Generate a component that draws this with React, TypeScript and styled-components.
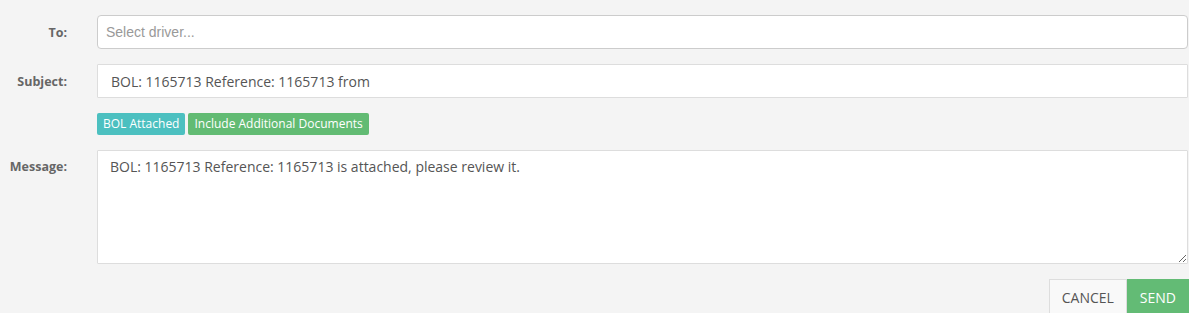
import React, { FC } from 'react';
import styled, { createGlobalStyle } from 'styled-components';

const GlobalStyle = createGlobalStyle`
  html, body {
    overflow: hidden;
  }
  body {
    margin: 0;
    background-color: #f4f4f4;
    font-family: 'Open Sans', sans-serif;
  }
`;

const Form = styled.div`
  display: grid;
  grid-template-columns: 67px 1fr;
  column-gap: 30px;
  row-gap: 15px;
  padding: 15px 1px 0 0;
  align-items: center;
`;

const Label = styled.label<{ $top?: boolean }>`
  font-size: 12.5px;
  font-weight: 700;
  color: #666;
  text-align: right;
  align-self: ${(p) => (p.$top ? 'start' : 'center')};
  padding-top: ${(p) => (p.$top ? '8px' : '0')};
`;

const Select = styled.div`
  height: 34px;
  box-sizing: border-box;
  border: 1px solid #ccc;
  border-radius: 4px;
  background: #fff;
  display: flex;
  align-items: center;
  padding-left: 8px;
  font-family: 'Liberation Sans', Arial, sans-serif;
  font-size: 14px;
  color: #999;
`;

const Input = styled.input`
  height: 34px;
  box-sizing: border-box;
  border: 1px solid #ddd;
  border-radius: 1px;
  background: #fff;
  padding: 0 13px;
  font-family: 'Open Sans', sans-serif;
  font-size: 14px;
  color: #555;
  outline: none;
`;

const Badges = styled.div`
  grid-column: 2;
  display: flex;
  gap: 3px;
`;

const Badge = styled.span<{ $color: string }>`
  background: ${(p) => p.$color};
  color: #fff;
  font-size: 12px;
  line-height: 22px;
  padding: 0 6px;
  border-radius: 2px;
`;

const TextArea = styled.textarea`
  height: 114px;
  box-sizing: border-box;
  border: 1px solid #ddd;
  border-radius: 1px;
  background: #fff;
  padding: 6px 12px;
  font-family: 'Open Sans', sans-serif;
  font-size: 14px;
  line-height: 20px;
  color: #555;
  outline: none;
  resize: vertical;
`;

const Actions = styled.div`
  display: flex;
  justify-content: flex-end;
  padding-top: 15px;
`;

const Button = styled.button<{ $primary?: boolean }>`
  height: 36px;
  box-sizing: border-box;
  padding: 0 12px;
  border: 1px solid ${(p) => (p.$primary ? '#63bb75' : '#ddd')};
  background: ${(p) => (p.$primary ? '#63bb75' : '#f9f9f9')};
  color: ${(p) => (p.$primary ? '#fff' : '#555')};
  font-family: 'Open Sans', sans-serif;
  font-size: 14px;
  text-transform: uppercase;
  border-radius: 0;
`;

const App: FC = () => {
  const text = 'BOL: 1165713 Reference: 1165713';
  return (
    <>
      <GlobalStyle />
      <Form>
        <Label>To:</Label>
        <Select>Select driver...</Select>
        <Label>Subject:</Label>
        <Input defaultValue={`${text} from`} />
        <Badges>
          <Badge $color="#4cc0c0">BOL Attached</Badge>
          <Badge $color="#62bb73">Include Additional Documents</Badge>
        </Badges>
        <Label $top>Message:</Label>
        <TextArea defaultValue={`${text} is attached, please review it.`} />
      </Form>
      <Actions>
        <Button>Cancel</Button>
        <Button $primary>Send</Button>
      </Actions>
    </>
  );
};

export default App;
